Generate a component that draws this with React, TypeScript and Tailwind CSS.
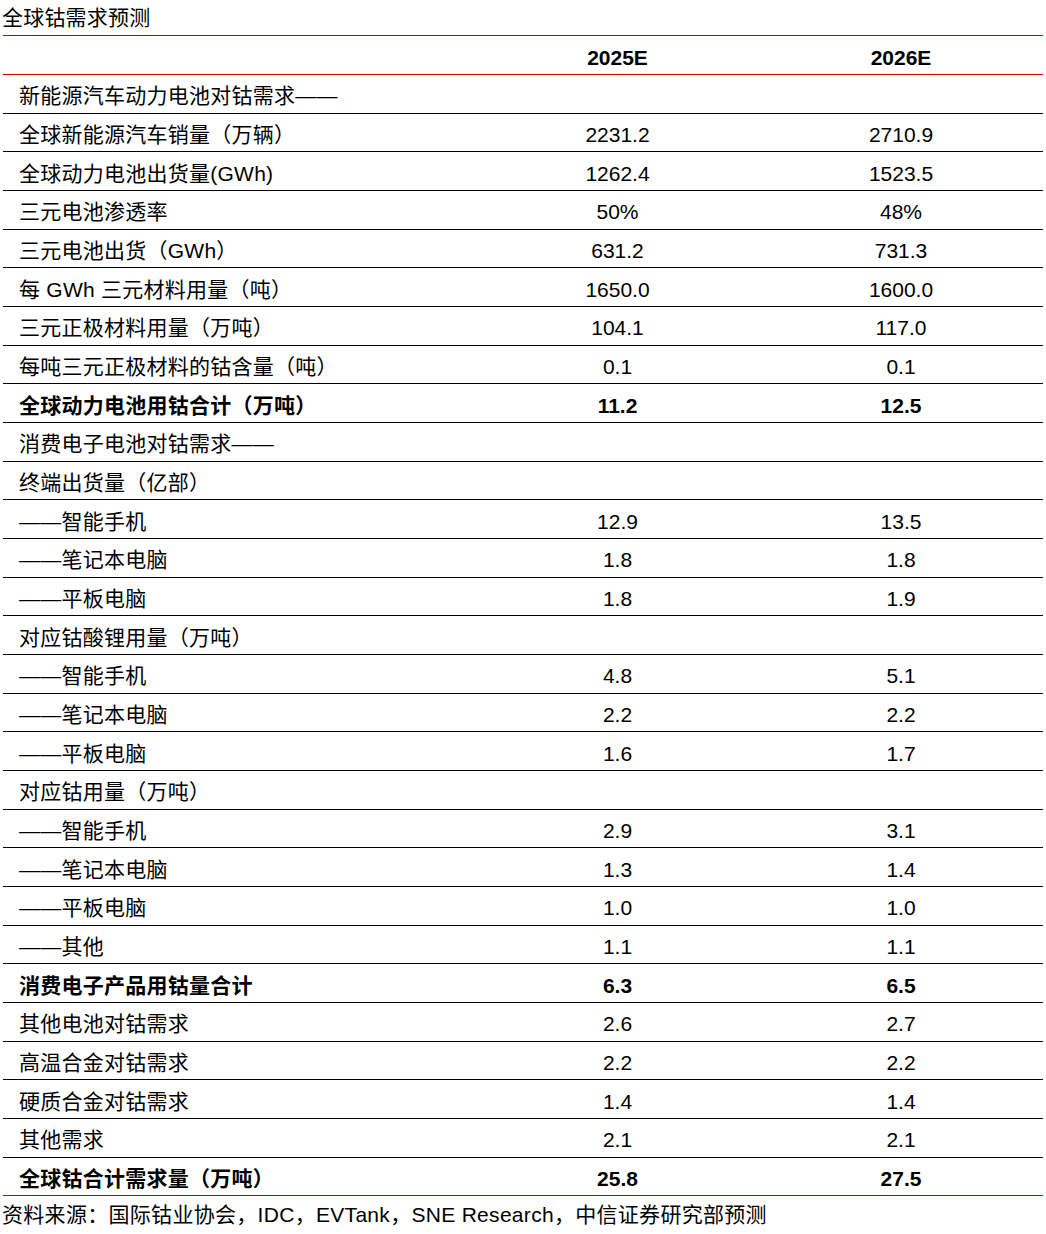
import React from 'react';

type Row = {
  label: string;
  a?: string;
  b?: string;
  bold?: boolean;
};

const rows: Row[] = [
  { label: '新能源汽车动力电池对钴需求——' },
  { label: '全球新能源汽车销量（万辆）', a: '2231.2', b: '2710.9' },
  { label: '全球动力电池出货量(GWh)', a: '1262.4', b: '1523.5' },
  { label: '三元电池渗透率', a: '50%', b: '48%' },
  { label: '三元电池出货（GWh）', a: '631.2', b: '731.3' },
  { label: '每 GWh 三元材料用量（吨）', a: '1650.0', b: '1600.0' },
  { label: '三元正极材料用量（万吨）', a: '104.1', b: '117.0' },
  { label: '每吨三元正极材料的钴含量（吨）', a: '0.1', b: '0.1' },
  { label: '全球动力电池用钴合计（万吨）', a: '11.2', b: '12.5', bold: true },
  { label: '消费电子电池对钴需求——' },
  { label: '终端出货量（亿部）' },
  { label: '——智能手机', a: '12.9', b: '13.5' },
  { label: '——笔记本电脑', a: '1.8', b: '1.8' },
  { label: '——平板电脑', a: '1.8', b: '1.9' },
  { label: '对应钴酸锂用量（万吨）' },
  { label: '——智能手机', a: '4.8', b: '5.1' },
  { label: '——笔记本电脑', a: '2.2', b: '2.2' },
  { label: '——平板电脑', a: '1.6', b: '1.7' },
  { label: '对应钴用量（万吨）' },
  { label: '——智能手机', a: '2.9', b: '3.1' },
  { label: '——笔记本电脑', a: '1.3', b: '1.4' },
  { label: '——平板电脑', a: '1.0', b: '1.0' },
  { label: '——其他', a: '1.1', b: '1.1' },
  { label: '消费电子产品用钴量合计', a: '6.3', b: '6.5', bold: true },
  { label: '其他电池对钴需求', a: '2.6', b: '2.7' },
  { label: '高温合金对钴需求', a: '2.2', b: '2.2' },
  { label: '硬质合金对钴需求', a: '1.4', b: '1.4' },
  { label: '其他需求', a: '2.1', b: '2.1' },
  { label: '全球钴合计需求量（万吨）', a: '25.8', b: '27.5', bold: true },
];

const font = { fontFamily: '"Liberation Sans", "Noto Sans CJK SC", sans-serif' };

export default function App() {
  return (
    <div className="w-[1046px] h-[1234px] bg-white text-black text-[21px] leading-none" style={font}>
      {/* 标题 */}
      <div className="h-[35px] pl-[2px] flex items-center tracking-[0.2px]">全球钴需求预测</div>

      <div className="ml-[3px] w-[1040px]">
        {/* 表头 */}
        <div className="grid grid-cols-[473px_283px_284px] h-[40px] border-y border-[#c00000] font-bold items-center">
          <div />
          <div className="text-center pt-[4px]">2025E</div>
          <div className="text-center pt-[4px]">2026E</div>
        </div>

        {rows.map((r, i) => {
          const last = i === rows.length - 1;
          return (
            <div
              key={i}
              className={`grid grid-cols-[473px_283px_284px] h-[38.68px] items-center border-b ${
                last ? 'border-[#c00000]' : 'border-black'
              } ${r.bold ? 'font-bold' : ''}`}
            >
              <div className="pl-[16px] pt-[4px] tracking-[0.25px]">{r.label}</div>
              <div className="text-center pt-[4px]">{r.a}</div>
              <div className="text-center pt-[4px]">{r.b}</div>
            </div>
          );
        })}
      </div>

      {/* 资料来源 */}
      <div className="pl-[2px] h-[36px] flex items-center tracking-[0.3px]">
        资料来源：国际钴业协会，IDC，EVTank，SNE Research，中信证券研究部预测
      </div>
    </div>
  );
}
